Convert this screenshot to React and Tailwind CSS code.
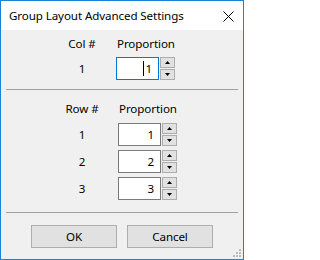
import React from "react";

const font = { fontFamily: '"Segoe UI", "Noto Sans", "Open Sans", sans-serif' };

function Spin({ left }) {
  return (
    <div className={`flex flex-col justify-between h-[23px] w-[15px] ${left}`}>
      <div className="h-[11px] border border-[#adadad] bg-[#e1e1e1] flex items-center justify-center">
        <svg width="5" height="3" viewBox="0 0 5 3"><path d="M2.5 0 L5 3 L0 3 Z" fill="#000" /></svg>
      </div>
      <div className="h-[11px] border border-[#adadad] bg-[#e1e1e1] flex items-center justify-center">
        <svg width="5" height="3" viewBox="0 0 5 3"><path d="M0 0 L5 0 L2.5 3 Z" fill="#000" /></svg>
      </div>
    </div>
  );
}

function Row({ n, mt }) {
  return (
    <div className={`flex items-center ${mt}`}>
      <div className="ml-[59px] w-[44px] text-center leading-[16px]">{n}</div>
      <div className="ml-[14px] w-[43px] h-[23px] border border-[#7a7a7a] bg-white flex items-center justify-end pr-[6px] leading-[16px]">
        {n}
      </div>
      <Spin left="ml-[1px]" />
    </div>
  );
}

export default function App() {
  return (
    <div
      className="w-[244px] h-[260px] border border-[#1883d7] bg-[#f0f0f0] flex flex-col text-[11.6px] tracking-[-0.1px] text-black relative"
      style={font}
    >
      <div className="h-[29px] bg-white flex items-center justify-between pl-[8px] pr-[9px]">
        <span className="leading-[16px]">Group Layout Advanced Settings</span>
        <svg width="11" height="11" viewBox="0 0 11 11" className="mt-[1px]">
          <path d="M0.5 0.5 L10.5 10.5 M10.5 0.5 L0.5 10.5" stroke="#000" strokeWidth="1" />
        </svg>
      </div>

      <div className="flex items-center mt-[6px] h-[16px]">
        <div className="ml-[59px] w-[44px] text-center leading-[16px]">Col #</div>
        <div className="ml-[13px] leading-[16px]">Proportion</div>
      </div>

      <div className="flex items-center mt-[5px]">
        <div className="ml-[59px] w-[44px] text-center leading-[16px]">1</div>
        <div className="ml-[12px] w-[43px] h-[23px] border border-[#0078d7] bg-white flex items-center justify-end pr-[6px] leading-[16px]">
          <span className="w-px h-[15px] bg-black mr-[1px]" />
          1
        </div>
        <Spin left="ml-[1px]" />
      </div>

      <div className="mt-[9px] mx-[5px] h-px bg-[#a0a0a0]" />

      <div className="flex items-center mt-[11px] h-[16px]">
        <div className="ml-[59px] w-[44px] text-center leading-[16px]">Row #</div>
        <div className="ml-[15px] leading-[16px]">Proportion</div>
      </div>

      <Row n="1" mt="mt-[6px]" />
      <Row n="2" mt="mt-[4px]" />
      <Row n="3" mt="mt-[4px]" />

      <div className="mt-[12px] mx-[5px] h-px bg-[#a0a0a0]" />

      <div className="flex mt-[12px] ml-[30px] gap-[10px]">
        <div className="w-[86px] h-[23px] border border-[#adadad] bg-[#e1e1e1] flex items-center justify-center leading-[16px]">OK</div>
        <div className="w-[86px] h-[23px] border border-[#adadad] bg-[#e1e1e1] flex items-center justify-center leading-[16px]">Cancel</div>
      </div>

      <div className="absolute right-[2px] bottom-[2px] w-[8px] h-[8px]">
        <div className="absolute left-[6px] top-0 w-[2px] h-[2px] bg-[#bcbcbc]" />
        <div className="absolute left-[3px] top-[3px] w-[2px] h-[2px] bg-[#bcbcbc]" />
        <div className="absolute left-[6px] top-[3px] w-[2px] h-[2px] bg-[#bcbcbc]" />
        <div className="absolute left-0 top-[6px] w-[2px] h-[2px] bg-[#bcbcbc]" />
        <div className="absolute left-[3px] top-[6px] w-[2px] h-[2px] bg-[#bcbcbc]" />
        <div className="absolute left-[6px] top-[6px] w-[2px] h-[2px] bg-[#bcbcbc]" />
      </div>
    </div>
  );
}
